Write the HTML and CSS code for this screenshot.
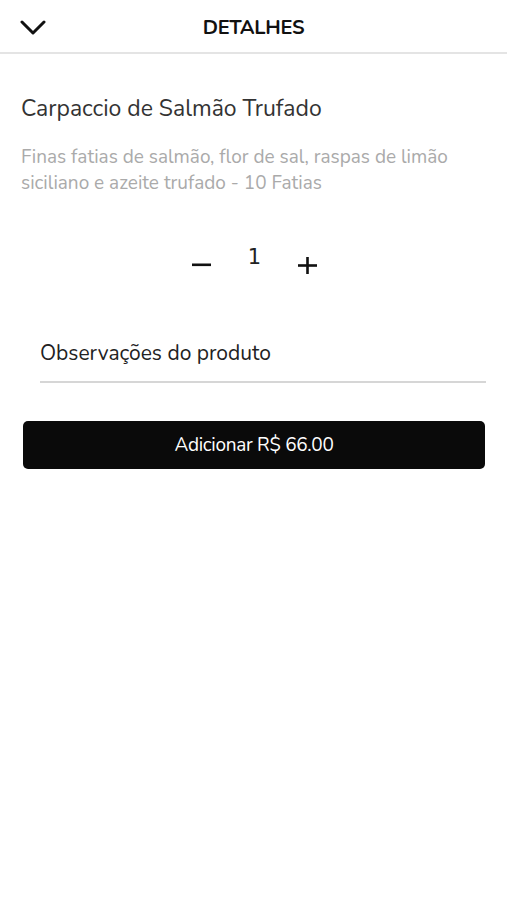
FILE: index.html
```html
<!DOCTYPE html>
<html lang="pt-BR">
<head>
    <meta charset="UTF-8">
    <meta name="viewport" content="width=device-width, initial-scale=1.0">
    <title>Detalhes</title>
    <link rel="stylesheet" href="styles.css">
</head>
<body>
    <header class="top-bar">
        <button class="back-btn" aria-label="Fechar">
            <svg width="26" height="16" viewBox="0 0 26 16">
                <path d="M2 2 L13 13 L24 2" fill="none" stroke="#111" stroke-width="3" stroke-linecap="round" stroke-linejoin="round"/>
            </svg>
        </button>
        <h1>DETALHES</h1>
    </header>

    <main class="product">
        <h2 class="product-name">Carpaccio de Salmão Trufado</h2>
        <p class="product-desc">Finas fatias de salmão, flor de sal, raspas de limão siciliano e azeite trufado - 10 Fatias</p>

        <div class="qty">
            <button class="qty-btn" aria-label="Diminuir">
                <svg width="19" height="4" viewBox="0 0 19 4"><rect x="0" y="0.5" width="19" height="2.6" fill="#111"/></svg>
            </button>
            <span class="qty-value">1</span>
            <button class="qty-btn plus" aria-label="Aumentar">
                <svg width="19" height="17" viewBox="0 0 19 17"><rect x="0" y="7.2" width="19" height="2.6" fill="#111"/><rect x="8.2" y="0" width="2.6" height="17" fill="#111"/></svg>
            </button>
        </div>

        <div class="notes">
            <input type="text" placeholder="Observações do produto">
        </div>

        <button class="add-btn">Adicionar R$ 66.00</button>
    </main>
</body>
</html>
```

FILE: styles.css
```css
* {
    margin: 0;
    padding: 0;
    box-sizing: border-box;
    font-family: 'Nunito', 'Lato', sans-serif;
}

body {
    background: #fff;
    color: #111;
}

button {
    background: none;
    border: none;
    cursor: pointer;
}

.top-bar {
    position: relative;
    height: 54px;
    border-bottom: 2px solid #e4e4e4;
    display: flex;
    align-items: center;
    justify-content: center;
}

.back-btn {
    position: absolute;
    left: 20px;
    top: 20px;
    display: flex;
}

.top-bar h1 {
    font-size: 20px;
    font-weight: 700;
    letter-spacing: -0.3px;
    margin-top: 2px;
}

.product {
    padding: 39px 21px 0 23px;
}

.product-name {
    font-size: 23px;
    font-weight: 400;
    color: #333;
    margin-left: -2px;
}

.product-desc {
    margin-top: 20px;
    margin-left: -2px;
    font-size: 19px;
    line-height: 26px;
    color: #aaa;
    max-width: 460px;
}

.qty {
    margin-top: 46px;
    display: flex;
    justify-content: center;
    align-items: center;
    gap: 32px;
    height: 30px;
}

.qty-btn {
    display: flex;
    width: 20px;
    justify-content: center;
    margin-top: 16px;
}

.qty-value {
    font-family: 'DejaVu Sans', sans-serif;
    font-size: 21px;
    color: #222;
    width: 22px;
    text-align: center;
}

.notes {
    margin: 59px 0 0 17px;
    border-bottom: 2px solid #d6d6d6;
}

.notes input {
    width: 100%;
    border: none;
    outline: none;
    font-size: 21px;
    padding: 8px 0 14px;
    color: #222;
}

.notes input::placeholder {
    color: #222;
}

.add-btn {
    display: block;
    width: 462px;
    height: 48px;
    margin-top: 38px;
    background: #0a0a0a;
    border-radius: 5px;
    color: #fff;
    font-size: 19px;
    letter-spacing: -0.3px;
}
```
